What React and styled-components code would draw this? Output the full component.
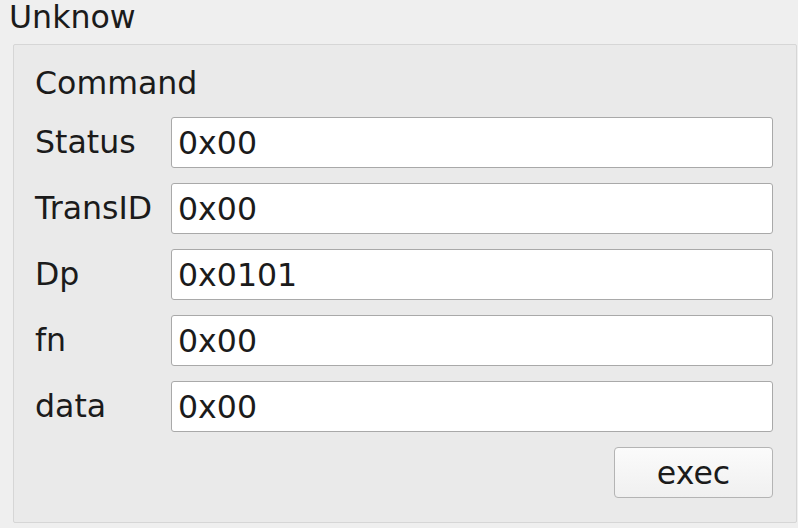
import React from 'react';
import styled, { createGlobalStyle } from 'styled-components';

const GlobalStyle = createGlobalStyle`
  html, body {
    margin: 0;
    padding: 0;
    background: #efefef;
  }
  body {
    width: 798px;
    height: 528px;
    overflow: hidden;
    font-family: "DejaVu Sans", "Liberation Sans", sans-serif;
    color: #1b1b1b;
  }
`;

const Page = styled.div`
  display: flex;
  flex-direction: column;
`;

const GroupTitle = styled.div`
  font-size: 31.6px;
  line-height: 35px;
  padding-left: 9px;
  height: 44px;
`;

const GroupBox = styled.div`
  margin-left: 13px;
  width: 784px;
  box-sizing: border-box;
  border: 1px solid #d6d6d6;
  border-radius: 2px;
  background: #eaeaea;
  padding: 21px 23px 24px 21px;
  display: flex;
  flex-direction: column;
`;

const SubTitle = styled.div`
  font-size: 31.6px;
  line-height: 35px;
  margin-bottom: 16px;
`;

const Form = styled.div`
  display: grid;
  grid-template-columns: 136px 1fr;
  row-gap: 15px;
  align-items: center;
`;

const Label = styled.label`
  font-size: 31.6px;
  line-height: 35px;
  white-space: nowrap;
`;

const Field = styled.input`
  height: 51px;
  box-sizing: border-box;
  border: 1px solid #a9a9a9;
  border-radius: 3px;
  background: #ffffff;
  font-family: "DejaVu Sans", "Liberation Sans", sans-serif;
  font-size: 31.6px;
  color: #1b1b1b;
  padding: 0 6px;
  outline: none;
  width: 100%;
`;

const Actions = styled.div`
  display: flex;
  justify-content: flex-end;
  margin-top: 15px;
`;

const Button = styled.button`
  width: 159px;
  height: 51px;
  box-sizing: border-box;
  border: 1px solid #b4b4b4;
  border-radius: 4px;
  background: linear-gradient(#fbfbfb, #f0f0f0);
  font-family: "DejaVu Sans", "Liberation Sans", sans-serif;
  font-size: 31.6px;
  color: #1b1b1b;
  padding: 0;
`;

const fields = [
  { label: 'Status', value: '0x00' },
  { label: 'TransID', value: '0x00' },
  { label: 'Dp', value: '0x0101' },
  { label: 'fn', value: '0x00' },
  { label: 'data', value: '0x00' },
];

export default function App() {
  return (
    <Page>
      <GlobalStyle />
      <GroupTitle>Unknow</GroupTitle>
      <GroupBox>
        <SubTitle>Command</SubTitle>
        <Form>
          {fields.map((f) => (
            <React.Fragment key={f.label}>
              <Label>{f.label}</Label>
              <Field defaultValue={f.value} />
            </React.Fragment>
          ))}
        </Form>
        <Actions>
          <Button>exec</Button>
        </Actions>
      </GroupBox>
    </Page>
  );
}
